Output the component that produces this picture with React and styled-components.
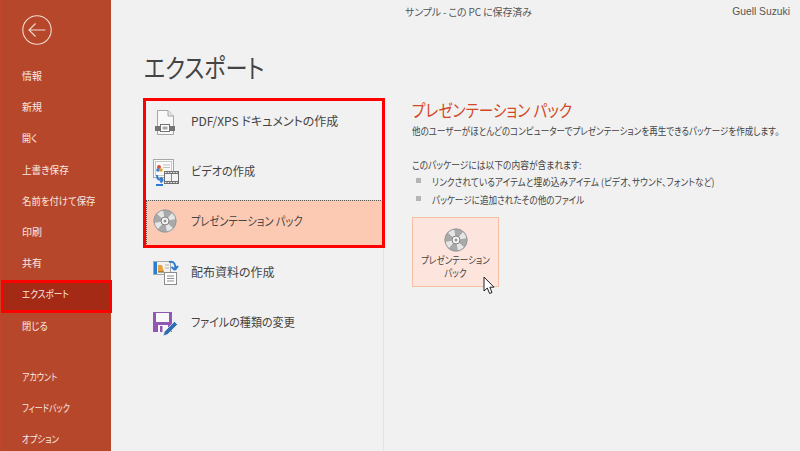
import React from "react";
import styled, { createGlobalStyle } from "styled-components";

const font = `"Noto Sans CJK JP", "Liberation Sans", sans-serif`;

const Global = createGlobalStyle`
  html, body { margin: 0; padding: 0; background: #f1f1f1; overflow: hidden; }
  body { font-family: ${font}; font-feature-settings: "palt"; }
`;

// squeeze: the kana in the reference's UI font run narrower than Noto's
const menuTop = [
  { label: "情報", squeeze: 1 },
  { label: "新規", squeeze: 1 },
  { label: "開く", squeeze: 0.9 },
  { label: "上書き保存", squeeze: 0.96 },
  { label: "名前を付けて保存", squeeze: 0.94 },
  { label: "印刷", squeeze: 1 },
  { label: "共有", squeeze: 1 },
  { label: "エクスポート", squeeze: 0.86, active: true },
  { label: "閉じる", squeeze: 0.93 },
];
const menuBottom = [
  { label: "アカウント", squeeze: 0.8 },
  { label: "フィードバック", squeeze: 0.8 },
  { label: "オプション", squeeze: 0.84 },
];

const Disc = ({ size }) => (
  <DiscSvg width={size} height={size} viewBox="0 0 24 24">
    <circle cx="12" cy="12" r="11.5" fill="#a9a9a9" />
    <path d="M12 12 L3.5 4.5 A11.5 11.5 0 0 1 10 .8 Z M12 12 L.8 14 A11.5 11.5 0 0 0 4.5 20.5 Z M12 12 L20.5 19.5 A11.5 11.5 0 0 1 14 23.2 Z M12 12 L23.2 10 A11.5 11.5 0 0 0 19.5 3.5 Z" fill="#e6e6e6" />
    <circle cx="12" cy="12" r="11" fill="none" stroke="#9b9b9b" strokeWidth="1" />
    <circle cx="12" cy="12" r="4" fill="#f6f6f6" stroke="#7f7f7f" strokeWidth="1" />
    <circle cx="12" cy="12" r="1.5" fill="#a08f8a" />
  </DiscSvg>
);

const PdfIcon = () => (
  <svg width="32" height="32" viewBox="0 0 32 32">
    <path d="M8.5 6.5 H19 L24.5 12 V30.5 H8.5 Z" fill="#f8f8f8" stroke="#a6a6a6" />
    <path d="M19 6.5 V12 H24.5" fill="#e4e4e4" stroke="#a6a6a6" />
    <rect x="6" y="22" width="5" height="5" fill="#737373" />
    <rect x="21" y="22" width="5" height="5" fill="#737373" />
    <rect x="11.5" y="20.5" width="9" height="7" fill="#fff" stroke="#737373" />
    <rect x="13.5" y="22.5" width="5" height="3" fill="#a6a6a6" />
  </svg>
);

const VideoIcon = () => (
  <svg width="32" height="32" viewBox="0 0 32 32">
    <rect x="4.5" y="5.5" width="20" height="18" fill="#fafafa" stroke="#a6a6a6" />
    <rect x="6.5" y="7.5" width="16" height="14" fill="none" stroke="#c8c8c8" />
    <circle cx="10" cy="13" r="2" fill="#d8503a" />
    <circle cx="9" cy="16" r="1.8" fill="#3f84c6" />
    <circle cx="12" cy="16" r="1.8" fill="#e3a62f" />
    <path d="M14 11 H21 M14 13.5 H21" stroke="#c0c0c0" />
    <rect x="15" y="17" width="15" height="13" fill="#6f6f6f" />
    <rect x="16" y="20" width="13" height="7" fill="#f4f4f4" />
    <path d="M22.5 20 V27" stroke="#8a8a8a" />
    <path d="M16 18.5 H29 M16 28.5 H29" stroke="#f4f4f4" strokeDasharray="1.5 1.2" />
    <path d="M8 21 C8 25 9 26 14 26 M14 26 L11.5 23.5 M14 26 L11.5 28.5" fill="none" stroke="#2b7cd3" strokeWidth="2" />
    <path d="M14 31 H7" stroke="#2b7cd3" strokeWidth="2" />
  </svg>
);

const HandoutIcon = () => (
  <svg width="32" height="32" viewBox="0 0 32 32">
    <rect x="4.5" y="6.5" width="17" height="13" fill="#f2f2f2" stroke="#a6a6a6" />
    <rect x="5" y="7" width="3" height="12" fill="#2b7cd3" />
    <path d="M9 17 V10 H13 L15 17 Z" fill="#e9a23b" />
    <path d="M9 17 H15" stroke="#7a5a2a" />
    <path d="M16 10 H20 M16 13 H20" stroke="#b0b0b0" />
    <rect x="15.5" y="17.5" width="12" height="12" fill="#fff" stroke="#8c8c8c" />
    <path d="M18 21 H25 M18 23.5 H25 M18 26 H25" stroke="#8c8c8c" />
    <path d="M20 7 C25 6 27 9 26 14 M26 15 L22.5 12 M26 15 L29 11" fill="none" stroke="#2b7cd3" strokeWidth="2" />
  </svg>
);

const SaveIcon = () => (
  <svg width="32" height="32" viewBox="0 0 32 32">
    <path d="M4 7 H23 V27 H4 Z" fill="#9058b4" />
    <rect x="7" y="8" width="13" height="9" fill="#f8f8f8" />
    <rect x="9" y="20" width="10" height="7" fill="#f8f8f8" />
    <rect x="11" y="21" width="2.5" height="6" fill="#9058b4" />
    <path d="M14 31 L15.5 26.5 L25.5 16.5 L28.5 19.5 L18.5 29.5 Z" fill="#2e6fb0" stroke="#f1f1f1" strokeWidth=".7" />
  </svg>
);

const Cursor = () => (
  <svg width="13" height="19" viewBox="0 0 13 19">
    <path d="M1 1 V15 L4.3 12 L6.6 17.5 L9 16.5 L6.8 11.2 H11 Z" fill="#fff" stroke="#222" strokeWidth="1" />
  </svg>
);

const App = () => (
  <Page>
    <Global />
    <Sidebar>
      <BackButton>
        <svg width="30" height="30" viewBox="0 0 30 30">
          <circle cx="15" cy="15" r="14.2" fill="none" stroke="#f3dcd4" strokeWidth="1.1" />
          <path d="M23.5 15 H7 M13.5 8.5 L7 15 L13.5 21.5" fill="none" stroke="#f3dcd4" strokeWidth="1.1" />
        </svg>
      </BackButton>
      <MenuList>
        {menuTop.map((m) => (
          <MenuItem key={m.label} $active={m.active}>
            <Squeeze $x={m.squeeze}>{m.label}</Squeeze>
          </MenuItem>
        ))}
      </MenuList>
      <MenuDivider />
      <MenuList>
        {menuBottom.map((m) => (
          <MenuItem key={m.label}>
            <Squeeze $x={m.squeeze}>{m.label}</Squeeze>
          </MenuItem>
        ))}
      </MenuList>
    </Sidebar>
    <Main>
      <TopBar>
        <DocState>サンプル - この PC に保存済み</DocState>
        <UserName>Guell Suzuki</UserName>
      </TopBar>
      <Title><Squeeze $x={0.85}>エクスポート</Squeeze></Title>
      <Content>
        <ExportList>
          <ExportRow><IconSlot><PdfIcon /></IconSlot>PDF/XPS ドキュメントの作成</ExportRow>
          <ExportRow><IconSlot><VideoIcon /></IconSlot><Squeeze $x={0.93}>ビデオの作成</Squeeze></ExportRow>
          <ExportRow $selected><IconSlot $inset><Disc size={24} /></IconSlot><Squeeze $x={0.85}>プレゼンテーション パック</Squeeze></ExportRow>
          <ExportRow><IconSlot><HandoutIcon /></IconSlot>配布資料の作成</ExportRow>
          <ExportRow><IconSlot><SaveIcon /></IconSlot><Squeeze $x={0.92}>ファイルの種類の変更</Squeeze></ExportRow>
          <RedFrame />
        </ExportList>
        <Detail>
          <DetailTitle><Squeeze $x={0.86}>プレゼンテーション パック</Squeeze></DetailTitle>
          <DetailText><Squeeze $x={0.852}>他のユーザーがほとんどのコンピューターでプレゼンテーションを再生できるパッケージを作成します。</Squeeze></DetailText>
          <DetailLead><Squeeze $x={0.875}>このパッケージには以下の内容が含まれます:</Squeeze></DetailLead>
          <Bullets>
            <li><Squeeze $x={0.87}>リンクされているアイテムと埋め込みアイテム (ビデオ、サウンド、フォントなど)</Squeeze></li>
            <li><Squeeze $x={0.86}>パッケージに追加されたその他のファイル</Squeeze></li>
          </Bullets>
          <PackButton>
            <Disc size={24} />
            <PackLabel>プレゼンテーション<br />パック</PackLabel>
            <CursorSpot><Cursor /></CursorSpot>
          </PackButton>
        </Detail>
      </Content>
    </Main>
  </Page>
);

export default App;

const Page = styled.div`
  display: flex;
  width: 800px;
  height: 451px;
  overflow: hidden;
  background: #f1f1f1;
  color: #444;
`;

const Squeeze = styled.span`
  display: inline-block;
  position: relative;
  white-space: nowrap;
  transform-origin: left center;
  transform: scaleX(${(p) => p.$x});
`;

const Sidebar = styled.aside`
  width: 111px;
  flex: none;
  box-sizing: border-box;
  padding-top: 15px;
  background: #b7472a;
  border-left: 1px solid #c2452a;
  display: flex;
  flex-direction: column;
  position: relative;
  z-index: 1;
`;

const BackButton = styled.div`
  height: 30px;
  padding-left: 21px;
  margin-bottom: 15px;
`;

const MenuList = styled.div`
  display: flex;
  flex-direction: column;
`;

const MenuItem = styled.div`
  height: 31.2px;
  line-height: 31px;
  padding-left: 21px;
  font-size: 10px;
  color: #f8e9e4;
  white-space: nowrap;
  position: relative;
  ${(p) =>
    p.$active &&
    `
    &::before {
      content: "";
      position: absolute;
      left: 0;
      right: -1px;
      top: 1.6px;
      bottom: -3.4px;
      box-sizing: border-box;
      background: #a52a16;
      border: 3px solid #ff0000;
    }
  `}
`;

const MenuDivider = styled.div`
  height: 1px;
  width: 68px;
  margin: 10px 0 10px 21px;
  background: #cf5f45;
`;

const Main = styled.main`
  flex: 1;
  display: flex;
  flex-direction: column;
  min-width: 0;
`;

const TopBar = styled.div`
  height: 22px;
  display: flex;
  align-items: center;
  font-size: 10px;
  letter-spacing: -0.15px;
  color: #555;
  padding-left: 294px;
`;

const DocState = styled.span`
  flex: 1;
`;

const UserName = styled.span`
  font-family: "Liberation Sans", sans-serif;
  font-size: 10.3px;
  letter-spacing: 0;
  padding-right: 10px;
`;

const Title = styled.h1`
  margin: 0;
  padding: 20px 0 0 33px;
  height: 56px;
  line-height: 50px;
  font-size: 26px;
  font-weight: 400;
  color: #444;
`;

const Content = styled.div`
  flex: 1;
  display: flex;
  padding-left: 32px;
`;

const ExportList = styled.div`
  position: relative;
  width: 241px;
  flex: none;
  box-sizing: border-box;
  padding: 0 0 0 3px;
  border-right: 1px solid #e3e3e3;
`;

const RedFrame = styled.div`
  position: absolute;
  left: 0;
  top: 0;
  width: 242px;
  height: 150px;
  box-sizing: border-box;
  border: 3px solid #ff0000;
`;

const ExportRow = styled.div`
  height: ${(p) => (p.$selected ? "46px" : "50px")};
  margin-top: ${(p) => (p.$selected ? "5px" : "0")};
  padding-bottom: ${(p) => (p.$selected ? "5px" : "0")};
  box-sizing: border-box;
  display: flex;
  align-items: center;
  font-size: 12px;
  color: #444;
  white-space: nowrap;
  background: ${(p) => (p.$selected ? "#fccab3" : "transparent")};
  outline: ${(p) => (p.$selected ? "1px dotted #555" : "none")};
  outline-offset: -1px;
  &:first-child {
    margin-top: -3px;
  }
`;

const IconSlot = styled.span`
  width: 45px;
  flex: none;
  display: flex;
  padding-left: ${(p) => (p.$inset ? "7px" : "3px")};
  box-sizing: border-box;
`;

const Detail = styled.section`
  flex: 1;
  padding: 1px 0 0 28px;
  min-width: 0;
`;

const DetailTitle = styled.h2`
  margin: 0;
  font-size: 17px;
  line-height: 22px;
  font-weight: 400;
  color: #d24726;
`;

const DetailText = styled.p`
  margin: 1px 0 0;
  font-size: 10px;
  line-height: 18px;
`;

const DetailLead = styled.p`
  margin: 16px 0 0;
  font-size: 10px;
  line-height: 17px;
`;

const Bullets = styled.ul`
  list-style: none;
  margin: 0;
  padding: 0 0 0 20px;
  font-size: 10px;
  line-height: 18px;
  li {
    position: relative;
  }
  li::before {
    content: "";
    position: absolute;
    left: -16px;
    top: 5px;
    width: 5px;
    height: 5px;
    background: #b5b5b5;
  }
`;

const PackButton = styled.div`
  position: relative;
  width: 87px;
  height: 70px;
  margin-top: 8px;
  box-sizing: border-box;
  padding-top: 10px;
  background: #fde4dc;
  border: 1px solid #f5bfa6;
  display: flex;
  flex-direction: column;
  align-items: center;
  gap: 1px;
  color: #444;
`;

const PackLabel = styled.span`
  font-size: 10px;
  line-height: 13px;
  text-align: center;
  white-space: nowrap;
  transform: scaleX(0.85);
`;

const DiscSvg = styled.svg`
  flex: none;
`;

const CursorSpot = styled.span`
  position: absolute;
  left: 70px;
  top: 58px;
`;
